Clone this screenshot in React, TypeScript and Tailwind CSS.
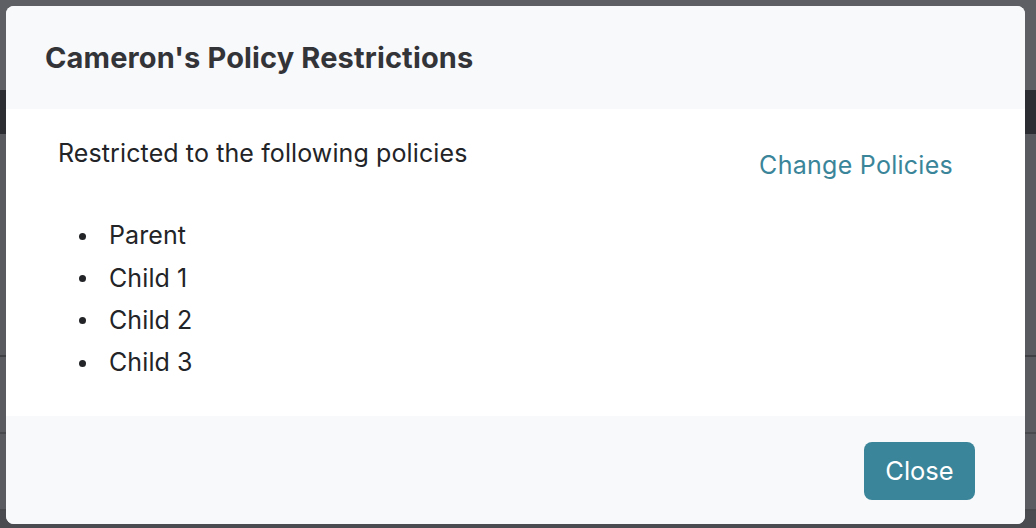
import React from "react";

export default function App() {
  const items = ["Parent", "Child 1", "Child 2", "Child 3"];
  return (
    <div
      className="relative w-[1036px] h-[528px] overflow-hidden bg-[#5c5d62]"
      style={{ fontFamily: "Inter, 'Noto Sans', sans-serif" }}
    >
      {/* backdrop page hints */}
      <div className="flex flex-col">
        <div className="h-[90px] bg-[#5e5f64]" />
        <div className="h-[44px] bg-[#2b2d32]" />
        <div className="h-[221px] bg-[#595a5f]" />
        <div className="h-[2px] bg-[#3f4044]" />
        <div className="h-[75px] bg-[#5a5b60]" />
        <div className="h-[2px] bg-[#48494d]" />
        <div className="h-[75px] bg-[#5a5b60]" />
        <div className="h-[2px] bg-[#48494d]" />
        <div className="h-[20px] bg-[#4a4b50]" />
      </div>

      {/* modal */}
      <div className="absolute left-[6px] top-[6px] w-[1019px] h-[518px] rounded-[8px] overflow-hidden flex flex-col bg-white">
        <div className="h-[103px] bg-[#f8f9fb] flex items-center pl-[39px]">
          <h2 className="text-[29px] font-bold text-[#333438] leading-none tracking-[0.14px]">
            Cameron's Policy Restrictions
          </h2>
        </div>
        <div className="h-[307px] bg-white flex justify-between pl-[52px] pr-[72px] pt-[29px]">
          <div className="flex flex-col">
            <p className="text-[25px] text-[#232427] leading-[30px] tracking-[0.11px]">
              Restricted to the following policies
            </p>
            <ul className="mt-[47px] flex flex-col">
              {items.map((it) => (
                <li key={it} className="flex items-center h-[42.3px] text-[25px] text-[#232427] tracking-[0.1px]">
                  <span className="w-[7px] h-[7px] rounded-full bg-[#232427] ml-[21px] mr-[23px]" />
                  {it}
                </li>
              ))}
            </ul>
          </div>
          <a className="text-[25px] text-[#3a8599] leading-[30px] mt-[12px] tracking-[0.27px]">Change Policies</a>
        </div>
        <div className="flex-1 bg-[#f8f9fb] flex items-center justify-end pr-[50px] pt-[2px]">
          <button className="w-[111px] h-[58px] rounded-[8px] bg-[#3a8599] text-white text-[25.5px] leading-none">
            Close
          </button>
        </div>
      </div>
    </div>
  );
}
